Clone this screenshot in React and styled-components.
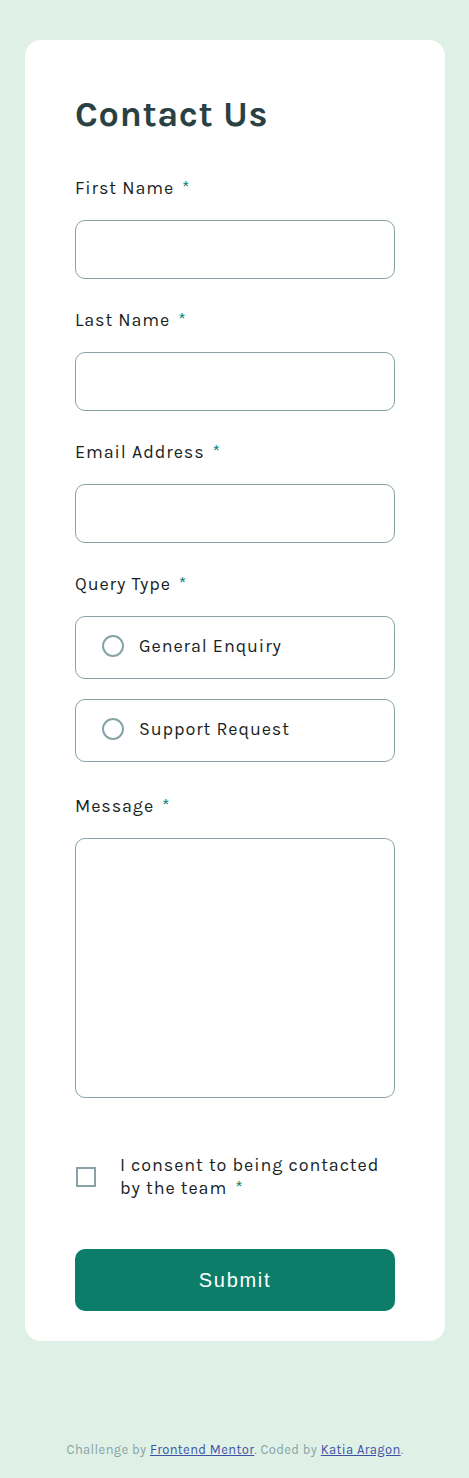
import React from "react";
import styled, { createGlobalStyle } from "styled-components";

const GlobalStyle = createGlobalStyle`
  html, body { margin: 0; padding: 0; }
  body {
    background: #dff1e7;
    font-family: "Karla", "Lato", "Liberation Sans", sans-serif;
    color: #2a4144;
  }
  * { box-sizing: border-box; }
`;

const Page = styled.div`
  min-height: 1478px;
  padding: 40px 24px 0 25px;
  display: flex;
  flex-direction: column;
  align-items: center;
`;

const Card = styled.form`
  width: 420px;
  background: #ffffff;
  border-radius: 16px;
  padding: 50px 50px 30px;
  display: flex;
  flex-direction: column;
`;

const Title = styled.h1`
  margin: 0 0 38px;
  font-size: 36px;
  line-height: 48px;
  font-weight: 700;
  color: #2a4144;
  letter-spacing: 0.6px;
`;

const Field = styled.div`
  display: flex;
  flex-direction: column;
  margin-bottom: ${(p) => p.$mb ?? 29}px;
`;

const Label = styled.label`
  font-size: 18px;
  line-height: 24px;
  letter-spacing: 0.9px;
  color: #1a1f1f;
  margin-bottom: 20px;
`;

const Star = styled.span`
  color: #0c7d69;
  margin-left: 8px;
`;

const Input = styled.input`
  width: 100%;
  height: 59px;
  border: 1px solid #87a3a6;
  border-radius: 10px;
  background: #fff;
  font: inherit;
`;

const TextArea = styled.textarea`
  width: 100%;
  height: 260px;
  border: 1px solid #87a3a6;
  border-radius: 10px;
  resize: none;
  font: inherit;
`;

const RadioGroup = styled.div`
  display: flex;
  flex-direction: column;
  gap: 20px;
`;

const RadioBox = styled.label`
  height: 63px;
  border: 1px solid #87a3a6;
  border-radius: 10px;
  display: flex;
  align-items: center;
  padding: 0 0 4px 26px;
  gap: 15px;
  font-size: 18px;
  letter-spacing: 0.9px;
  color: #1a1f1f;
`;

const RadioCircle = styled.span`
  width: 22px;
  height: 22px;
  border-radius: 50%;
  border: 2px solid #87a3a6;
  flex: none;
`;

const ConsentRow = styled.label`
  display: flex;
  align-items: center;
  gap: 24px;
  margin: 56px 0 49px;
  font-size: 18px;
  line-height: 23px;
  letter-spacing: 0.9px;
  color: #1a1f1f;
`;

const CheckBox = styled.span`
  width: 20px;
  height: 20px;
  border: 2px solid #87a3a6;
  flex: none;
  margin-left: 1px;
`;

const SubmitButton = styled.button`
  width: 100%;
  height: 62px;
  border: none;
  border-radius: 10px;
  background: #0c7d69;
  color: #ffffff;
  font-family: "Liberation Sans", Arial, sans-serif;
  font-size: 20px;
  letter-spacing: 1.7px;
  cursor: pointer;
`;

const Footer = styled.p`
  margin: 101px 0 0;
  font-size: 13px;
  letter-spacing: 0.36px;
  color: #87a3a6;
  text-align: center;
`;

const FooterLink = styled.a`
  color: #3e52a3;
  text-decoration: underline;
`;

export default function App() {
  return (
    <>
      <GlobalStyle />
      <Page>
        <Card onSubmit={(e) => e.preventDefault()}>
          <Title>Contact Us</Title>
          <Field>
            <Label>First Name<Star>*</Star></Label>
            <Input type="text" />
          </Field>
          <Field>
            <Label>Last Name<Star>*</Star></Label>
            <Input type="text" />
          </Field>
          <Field>
            <Label>Email Address<Star>*</Star></Label>
            <Input type="email" />
          </Field>
          <Field $mb={32}>
            <Label>Query Type<Star>*</Star></Label>
            <RadioGroup>
              <RadioBox><RadioCircle />General Enquiry</RadioBox>
              <RadioBox><RadioCircle />Support Request</RadioBox>
            </RadioGroup>
          </Field>
          <Field $mb={0}>
            <Label>Message<Star>*</Star></Label>
            <TextArea />
          </Field>
          <ConsentRow>
            <CheckBox />
            <span>I consent to being contacted by the team<Star>*</Star></span>
          </ConsentRow>
          <SubmitButton type="submit">Submit</SubmitButton>
        </Card>
        <Footer>
          Challenge by <FooterLink href="#">Frontend Mentor</FooterLink>. Coded by{" "}
          <FooterLink href="#">Katia Aragon</FooterLink>.
        </Footer>
      </Page>
    </>
  );
}
